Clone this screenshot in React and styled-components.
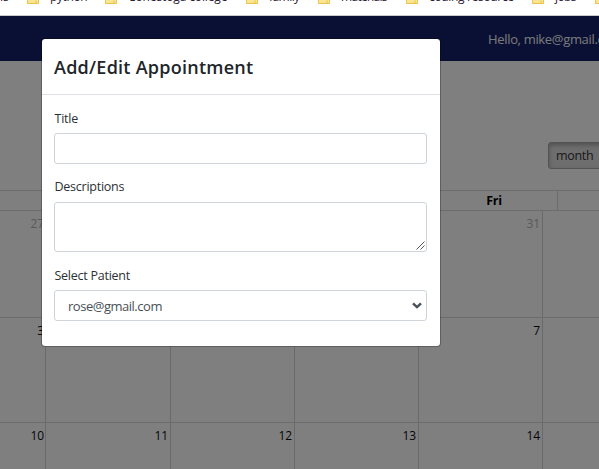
import React from "react";
import styled, { createGlobalStyle } from "styled-components";

const Global = createGlobalStyle`
  *, *::before, *::after { box-sizing: border-box; }
  html, body { margin: 0; padding: 0; overflow: hidden; background: #fff; }
  body { font-family: "Open Sans", "Noto Sans", sans-serif; font-size: 13px; color: #212529; }
`;

const Window = styled.div`
  width: 599px;
  height: 469px;
  display: flex;
  flex-direction: column;
  overflow: hidden;
`;

const BookmarkBar = styled.div`
  height: 16px;
  flex: none;
  display: flex;
  align-items: flex-start;
  overflow: hidden;
  background: #fff;
  border-bottom: 1px solid #c8cacd;
`;

const Bookmark = styled.div`
  flex: none;
  width: ${(p) => p.$width}px;
  height: 16px;
  margin-top: -11px;
  display: flex;
  gap: 11px;
  align-items: center;
  white-space: nowrap;
  font-size: 12px;
  line-height: 16px;
  letter-spacing: ${(p) => p.$track || 0}px;
  color: #2a2033;
`;

const FolderSvg = styled.svg`
  flex: none;
  display: block;
  margin-top: 1px;
`;

const Viewport = styled.div`
  position: relative;
  flex: 1;
  min-height: 0;
  overflow: hidden;
`;

const Navbar = styled.div`
  height: 45px;
  background: #142066;
  display: flex;
  align-items: center;
  padding-left: 488px;
`;

const Greeting = styled.span`
  color: #fff;
  opacity: 0.95;
  font-size: 13px;
  letter-spacing: -0.33px;
  white-space: nowrap;
`;

const Toolbar = styled.div`
  height: 129px;
  padding: 81px 0 0 548px;
`;

const ViewButton = styled.div`
  width: 80px;
  height: 27px;
  padding-left: 7px;
  border: 1px solid #a8a8a8;
  border-radius: 3px 0 0 3px;
  background: #dcdcdc;
  box-shadow: inset 0 2px 4px rgba(0, 0, 0, 0.28);
  font-size: 12.5px;
  line-height: 26px;
  letter-spacing: -0.3px;
  color: #333;
`;

const WeekHeader = styled.div`
  display: grid;
  grid-template-columns: repeat(6, 127px);
  width: 762px;
  height: 21px;
  margin-left: -77px;
  border-top: 1px solid #d8d8d8;
  border-bottom: 1px solid #d8d8d8;
`;

const DayName = styled.div`
  border-right: 1px solid #d8d8d8;
  text-align: center;
  font-weight: 700;
  font-size: 12.5px;
  line-height: 20px;
  letter-spacing: -0.3px;
  color: ${(p) => (p.$link ? "#000a80" : "#000")};
`;

const Week = styled.div`
  display: grid;
  grid-template-columns: 46px 125px 124px 124px 124px 124px;
  height: ${(p) => p.$height}px;
  border-bottom: 1px solid #d8d8d8;
`;

const Day = styled.div`
  border-right: 1px solid #d4d4d4;
  padding: 4px 2px 0 0;
  text-align: right;
  font-size: 12px;
  line-height: 17px;
  letter-spacing: -0.15px;
  color: ${(p) => (p.$muted ? "#b2b2b2" : "#0a0a14")};

  &:first-child {
    padding-right: 1px;
  }
`;

const Backdrop = styled.div`
  position: absolute;
  inset: 0;
  background: rgba(0, 0, 0, 0.5);
`;

const Modal = styled.div`
  position: absolute;
  left: 41px;
  top: 22px;
  width: 400px;
  height: 309px;
  background: #fff;
  background-clip: padding-box;
  border: 1px solid rgba(0, 0, 0, 0.25);
  border-radius: 4px;
`;

const ModalHeader = styled.div`
  height: 56px;
  padding: 0 12px;
  display: flex;
  align-items: center;
  border-bottom: 1px solid #dee2e6;
`;

const ModalTitle = styled.h5`
  margin: 1px 0 0;
  font-size: 18px;
  font-weight: 600;
  line-height: 26px;
  letter-spacing: 0.25px;
  color: #212529;
`;

const Form = styled.div`
  padding: 14px 12px 0;
`;

const Field = styled.div`
  margin-bottom: ${(p) => p.$gap}px;
`;

const Label = styled.label`
  display: block;
  height: 18px;
  margin-bottom: 6px;
  padding-left: 0.5px;
  font-size: 12.5px;
  line-height: ${(p) => p.$line || 18}px;
  letter-spacing: -0.25px;
  color: #2c3034;
`;

const Control = styled.div`
  position: relative;
  width: 373px;
  height: ${(p) => p.$height}px;
  border: 1px solid #ced4da;
  border-radius: 3px;
  background: #fff;
`;

const SelectBox = styled(Control)`
  display: flex;
  align-items: center;
  justify-content: space-between;
  padding: 0 3px 0 13px;
  font-size: 13px;
  letter-spacing: -0.48px;
  color: #495057;
`;

const ResizeGrip = styled.svg`
  position: absolute;
  right: 1px;
  bottom: 1px;
`;

function Folder() {
  return (
    <FolderSvg width="12" height="13" viewBox="0 0 12 13">
      <path d="M.5 1.5H5l1 2h5.5v9H.5z" fill="#fce590" stroke="#e8c34d" />
      <path d="M9 9.5v3" stroke="#e8c34d" />
    </FolderSvg>
  );
}

const bookmarks = [
  ["python", 78, -0.4],
  ["Conestoga college", 141, -0.12],
  ["family", 72, -0.55],
  ["materials", 88, -0.7],
  ["coding resource", 126, -0.33],
  ["jobs", 63, -0.6],
  ["", 20, 0],
];

const weekdays = ["Mon", "", "", "", "Fri", ""];

const weeks = [
  { height: 107, muted: true, days: [27, "", "", "", 31, ""] },
  { height: 105, days: [3, "", "", "", 7, ""] },
  { height: 105, days: [10, 11, 12, 13, 14, ""] },
];

export default function App() {
  return (
    <Window>
      <Global />
      <BookmarkBar>
        <Bookmark $width={27}>ls</Bookmark>
        {bookmarks.map(([name, width, track]) => (
          <Bookmark key={name} $width={width} $track={track}>
            <Folder />
            {name}
          </Bookmark>
        ))}
      </BookmarkBar>
      <Viewport>
        <Navbar>
          <Greeting>Hello, mike@gmail.com</Greeting>
        </Navbar>
        <Toolbar>
          <ViewButton>month</ViewButton>
        </Toolbar>
        <WeekHeader>
          {weekdays.map((name, i) => (
            <DayName key={i} $link={i === 0}>
              {name}
            </DayName>
          ))}
        </WeekHeader>
        {weeks.map((week) => (
          <Week key={week.days[0]} $height={week.height}>
            {week.days.map((day, i) => (
              <Day key={i} $muted={week.muted}>
                {day}
              </Day>
            ))}
          </Week>
        ))}
        <Backdrop />
        <Modal>
          <ModalHeader>
            <ModalTitle>Add/Edit Appointment</ModalTitle>
          </ModalHeader>
          <Form>
            <Field $gap={14}>
              <Label $line={20}>Title</Label>
              <Control $height={31} />
            </Field>
            <Field $gap={14}>
              <Label>Descriptions</Label>
              <Control $height={50}>
                <ResizeGrip width="9" height="9" viewBox="0 0 9 9">
                  <path d="M0.5 8.5L8.5 .5M4.5 8.5L8.5 4.5" stroke="#555" strokeWidth="1" />
                </ResizeGrip>
              </Control>
            </Field>
            <Field $gap={0}>
              <Label $line={20}>Select Patient</Label>
              <SelectBox $height={31}>
                rose@gmail.com
                <svg width="12" height="8" viewBox="0 0 12 8">
                  <path d="M2 1.3L6 5.1L10 1.3" fill="none" stroke="#495057" strokeWidth="2.4" />
                </svg>
              </SelectBox>
            </Field>
          </Form>
        </Modal>
      </Viewport>
    </Window>
  );
}
